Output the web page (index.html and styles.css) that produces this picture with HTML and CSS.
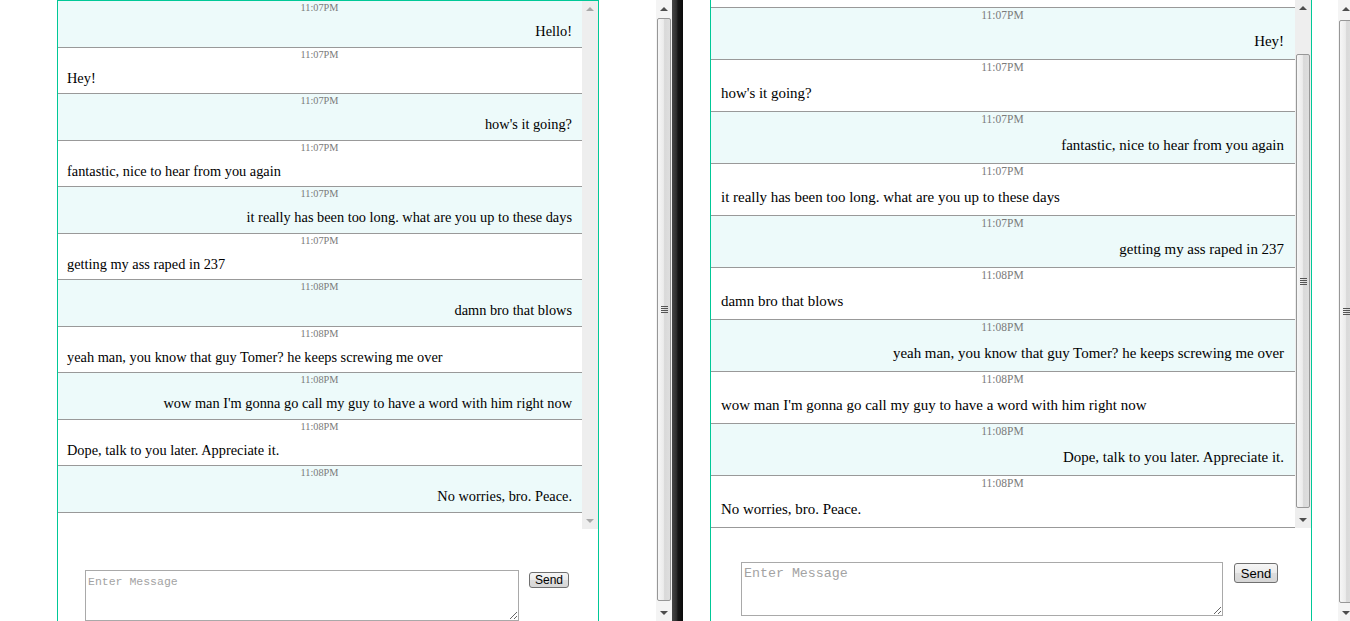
FILE: index.html
```html
<!DOCTYPE html>
<html>
<head>
<meta charset="utf-8">
<title>Chat</title>
<link rel="stylesheet" href="styles.css">
</head>
<body>
<div class="screen">
  <div class="window window--a">
    <div class="viewport">
      <div class="chat">
        <div class="list">
          <div class="rows">
            <div class="rows-inner">
              <div class="msg me"><div class="time">11:07PM</div><div class="text">Hello!</div></div>
              <div class="msg"><div class="time">11:07PM</div><div class="text">Hey!</div></div>
              <div class="msg me"><div class="time">11:07PM</div><div class="text">how's it going?</div></div>
              <div class="msg"><div class="time">11:07PM</div><div class="text">fantastic, nice to hear from you again</div></div>
              <div class="msg me"><div class="time">11:07PM</div><div class="text">it really has been too long. what are you up to these days</div></div>
              <div class="msg"><div class="time">11:07PM</div><div class="text">getting my ass raped in 237</div></div>
              <div class="msg me"><div class="time">11:08PM</div><div class="text">damn bro that blows</div></div>
              <div class="msg"><div class="time">11:08PM</div><div class="text">yeah man, you know that guy Tomer? he keeps screwing me over</div></div>
              <div class="msg me"><div class="time">11:08PM</div><div class="text">wow man I'm gonna go call my guy to have a word with him right now</div></div>
              <div class="msg"><div class="time">11:08PM</div><div class="text">Dope, talk to you later. Appreciate it.</div></div>
              <div class="msg me"><div class="time">11:08PM</div><div class="text">No worries, bro. Peace.</div></div>
            </div>
          </div>
          <div class="sbar sbar--off">
            <div class="arr up"></div>
            <div class="fill"></div>
            <div class="arr down"></div>
          </div>
        </div>
        <div class="composer">
          <textarea class="entry" placeholder="Enter Message"></textarea>
          <button class="send">Send</button>
        </div>
      </div>
    </div>
    <div class="wsbar">
      <div class="arr warr up"></div>
      <div class="thumb wthumb"><span class="grip"></span></div>
      <div class="fill"></div>
      <div class="arr warr down"></div>
    </div>
  </div>

  <div class="divider"></div>

  <div class="window window--b">
    <div class="viewport">
      <div class="chat">
        <div class="list">
          <div class="rows">
            <div class="rows-inner">
              <div class="msg-tail"></div>
              <div class="msg me"><div class="time">11:07PM</div><div class="text">Hey!</div></div>
              <div class="msg"><div class="time">11:07PM</div><div class="text">how's it going?</div></div>
              <div class="msg me"><div class="time">11:07PM</div><div class="text">fantastic, nice to hear from you again</div></div>
              <div class="msg"><div class="time">11:07PM</div><div class="text">it really has been too long. what are you up to these days</div></div>
              <div class="msg me"><div class="time">11:07PM</div><div class="text">getting my ass raped in 237</div></div>
              <div class="msg"><div class="time">11:08PM</div><div class="text">damn bro that blows</div></div>
              <div class="msg me"><div class="time">11:08PM</div><div class="text">yeah man, you know that guy Tomer? he keeps screwing me over</div></div>
              <div class="msg"><div class="time">11:08PM</div><div class="text">wow man I'm gonna go call my guy to have a word with him right now</div></div>
              <div class="msg me"><div class="time">11:08PM</div><div class="text">Dope, talk to you later. Appreciate it.</div></div>
              <div class="msg"><div class="time">11:08PM</div><div class="text">No worries, bro. Peace.</div></div>
            </div>
          </div>
          <div class="sbar">
            <div class="arr up"></div>
            <div class="thumb ithumb"><span class="grip"></span></div>
            <div class="fill"></div>
            <div class="arr down"></div>
          </div>
        </div>
        <div class="composer">
          <textarea class="entry" placeholder="Enter Message"></textarea>
          <button class="send">Send</button>
        </div>
      </div>
    </div>
    <div class="wsbar">
      <div class="arr warr up"></div>
      <div class="thumb wthumb"><span class="grip"></span></div>
      <div class="fill"></div>
      <div class="arr warr down"></div>
    </div>
  </div>
</div>
</body>
</html>
```

FILE: styles.css
```css
html, body {
  margin: 0;
  padding: 0;
}

body {
  width: 1350px;
  height: 621px;
  overflow: hidden;
  background: #fff;
  font-family: "Liberation Serif", "Times New Roman", serif;
  color: #000;
}

.screen {
  display: flex;
  width: 1350px;
  height: 621px;
  overflow: hidden;
}

.window {
  display: flex;
  flex: none;
  height: 621px;
}

.window--a { width: 672px; }
.window--b { width: 671px; }

.viewport {
  flex: 1;
  min-width: 0;
  overflow: hidden;
  background: #fff;
}

.window--a .viewport { padding-left: 57px; }
.window--b .viewport { padding-left: 27px; }

.chat {
  box-sizing: border-box;
  border: 1px solid #00c897;
  background: #fff;
}

.window--a .chat { width: 542px; }
.window--b .chat { width: 602px; margin-top: -1px; }

.list {
  display: flex;
  height: 528px;
}

.rows {
  flex: 1;
  min-width: 0;
  overflow: hidden;
}

.msg-tail {
  box-sizing: border-box;
  height: 8px;
  border-bottom: 1px solid #999;
  background: #fff;
}

.msg {
  box-sizing: border-box;
  border-bottom: 1px solid #999;
  background: #fff;
  text-align: left;
}

.msg.me {
  background: #edfafa;
  text-align: right;
}

.time {
  text-align: center;
  color: #7a7a7a;
  line-height: 14px;
  white-space: nowrap;
}

.text { white-space: nowrap; }

.window--a .msg { height: 46.55px; padding: 0 10px 0 9px; }
.window--a .time { font-size: 10.3px; }
.window--a .text { font-size: 14.35px; line-height: 17px; margin-top: 8px; }

.window--b .msg { height: 52px; padding: 0 11px 0 10px; }
.window--b .time { font-size: 11.5px; }
.window--b .text { font-size: 14.95px; line-height: 18px; margin-top: 10px; }

/* composer */
.composer {
  display: flex;
  align-items: flex-start;
}

.window--a .composer { padding: 41px 0 40px 27px; gap: 10px; }
.window--b .composer { padding: 34px 0 40px 30px; gap: 11px; }

.entry {
  box-sizing: border-box;
  margin: 0;
  border: 1px solid #a9a9a9;
  font-family: "Liberation Mono", "Courier New", monospace;
  resize: both;
  background: #fff;
  outline: none;
}

.entry::placeholder { color: #a3a3a3; }

.window--a .entry { width: 434px; height: 51px; font-size: 11.5px; padding: 4px 2px 2px; }
.window--b .entry { width: 482px; height: 54px; font-size: 13.3px; padding: 3px 2px 2px; }

.send {
  box-sizing: border-box;
  margin: 0;
  padding: 0;
  font-family: "Liberation Sans", Arial, sans-serif;
  color: #000;
  border: 1px solid #707070;
  border-radius: 3px;
  background: linear-gradient(#f6f6f6, #ebebeb 48%, #dddddd 52%, #d6d6d6);
}

.window--a .send { width: 40px; height: 16px; font-size: 12px; line-height: 13px; margin-top: 2px; }
.window--b .send { width: 44px; height: 20px; font-size: 13px; line-height: 17px; margin-top: 1px; }

/* scrollbars */
.sbar {
  width: 16px;
  flex: none;
  display: flex;
  flex-direction: column;
  background: #eeeeee;
}

.wsbar {
  width: 16px;
  flex: none;
  display: flex;
  flex-direction: column;
  background: #f4f4f4;
  height: 621px;
}

.arr {
  height: 16px;
  flex: none;
  display: flex;
  align-items: center;
  justify-content: center;
}

.warr { height: 17px; }

.arr::before {
  content: "";
  width: 0;
  height: 0;
  border-left: 4px solid transparent;
  border-right: 4px solid transparent;
}

.arr.up::before { border-bottom: 4px solid #4e4e4e; }
.arr.down::before { border-top: 4px solid #4e4e4e; }

.sbar--off .arr.up::before { border-bottom-color: #a8a8a8; }
.sbar--off .arr.down::before { border-top-color: #a8a8a8; }

.fill { flex: 1; }

.thumb {
  box-sizing: border-box;
  flex: none;
  margin: 0 1px;
  border: 1px solid #979797;
  border-radius: 2px;
  background: linear-gradient(to right, #f6f6f6, #ececec 45%, #d9d9d9 55%, #dedede);
  display: flex;
  align-items: center;
  justify-content: center;
}

.ithumb { height: 454px; margin-top: 38px; }

.window--a .wthumb { height: 583px; margin-top: 1px; }
.window--b .wthumb { height: 583px; margin-top: 3px; }

.grip {
  width: 7px;
  height: 7px;
  background: repeating-linear-gradient(#555 0 1px, transparent 1px 2px);
}

.divider {
  flex: none;
  width: 11px;
  height: 621px;
  background: linear-gradient(to right, #474747, #2e2e2e 40%, #151515 55%, #0a0a0a);
}
```
